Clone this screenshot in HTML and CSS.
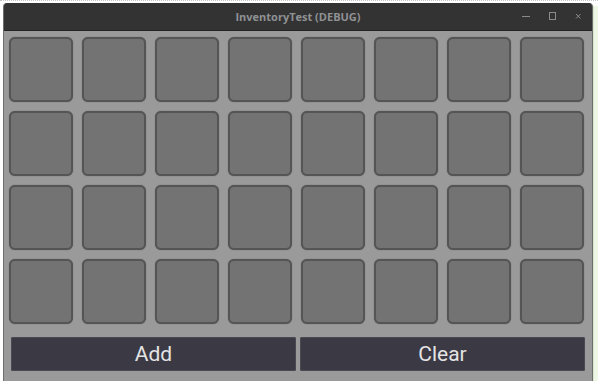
FILE: index.html
```html
<!DOCTYPE html>
<html lang="en">

<head>
    <meta charset="UTF-8">
    <meta name="viewport" content="width=device-width, initial-scale=1.0">
    <title>InventoryTest (DEBUG)</title>
    <link rel="stylesheet" href="styles.css">
</head>

<body>
    <div class="screen">
        <div class="window">
            <div class="titlebar">
                <span class="title">InventoryTest (DEBUG)</span>
                <div class="controls">
                    <svg width="10" height="10" viewBox="0 0 10 10"><path d="M1 5.5h8" stroke="#8a8a8a" stroke-width="1"/></svg>
                    <svg width="10" height="10" viewBox="0 0 10 10"><rect x="2.5" y="1.5" width="6" height="7" fill="none" stroke="#8a8a8a" stroke-width="1"/></svg>
                    <svg width="10" height="10" viewBox="0 0 10 10"><path d="M3 3l4.5 4.5M7.5 3L3 7.5" stroke="#8a8a8a" stroke-width="1"/></svg>
                </div>
            </div>
            <div class="content">
                <div class="inventory" id="inventory"></div>
                <div class="actions">
                    <button type="button">Add</button>
                    <button type="button">Clear</button>
                </div>
            </div>
        </div>
        <div class="edge"></div>
    </div>

    <script>
        // build the 8x4 slot grid
        const inventory = document.getElementById('inventory');
        for (let i = 0; i < 32; i++) {
            const slot = document.createElement('div');
            slot.className = 'slot';
            inventory.appendChild(slot);
        }
    </script>
</body>

</html>
```

FILE: styles.css
```css
body {
    margin: 0;
    background-color: #ffffff;
    font-family: Roboto, "Liberation Sans", sans-serif;
    overflow: hidden;
}

.screen {
    display: flex;
    height: 381px;
    border-top: 1px dotted #c4c4c4;
    padding-left: 3px;
    padding-top: 2px;
    box-sizing: border-box;
}

.window {
    width: 590px;
    display: flex;
    flex-direction: column;
    background-color: #9a9a9a;
    border-left: 1px solid #6e6e6e;
    border-right: 1px solid #6e6e6e;
    border-radius: 4px 4px 0 0;
    overflow: hidden;
    box-sizing: border-box;
}

.edge {
    flex: 1;
    margin-top: 3px;
    background-color: #eef6e6;
    border-left: 1px solid #d6e8c8;
}

.titlebar {
    height: 27px;
    background-color: #333333;
    border-bottom: 1px solid #242424;
    display: flex;
    align-items: center;
    justify-content: center;
    position: relative;
}

.title {
    font-family: "Open Sans", "Liberation Sans", sans-serif;
    font-weight: bold;
    font-size: 11px;
    color: #8f9193;
}

.controls {
    position: absolute;
    right: 9px;
    top: 8px;
    display: flex;
    gap: 16px;
}

.content {
    flex: 1;
    padding: 6px 0 0 5px;
}

.inventory {
    display: grid;
    grid-template-columns: repeat(8, 64px);
    grid-auto-rows: 65px;
    gap: 9px;
}

.slot {
    background-color: #737373;
    border: 2px solid #555555;
    border-radius: 6px;
    box-shadow: 0 0 1px #555555;
}

.actions {
    display: flex;
    gap: 4px;
    margin-top: 13px;
    margin-left: 2px;
}

button {
    width: 285px;
    height: 34px;
    background-color: #3b3944;
    color: #e4e4e4;
    border: 1px solid #4a4852;
    border-radius: 1px;
    font-family: Roboto, "Liberation Sans", sans-serif;
    font-size: 21px;
    padding: 0;
    cursor: pointer;
}
```
